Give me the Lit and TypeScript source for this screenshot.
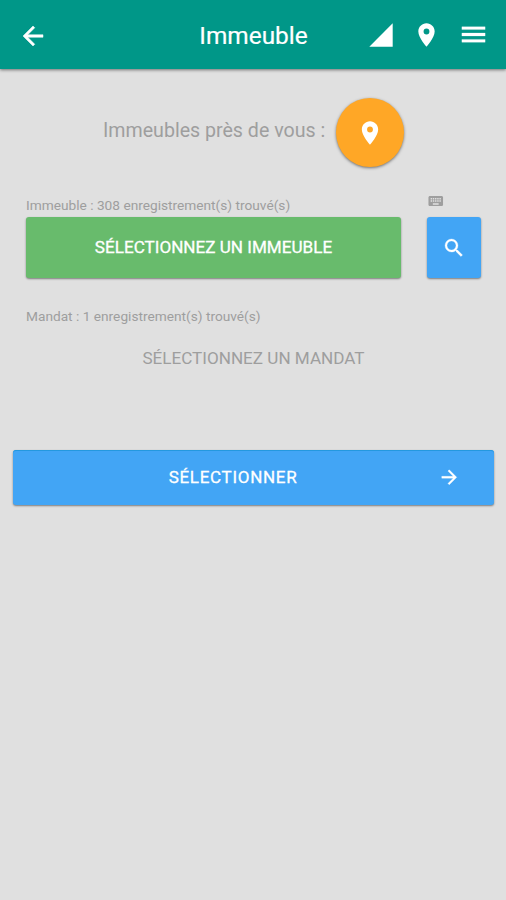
import { LitElement, html, css, svg } from "lit";
import { customElement, property } from "lit/decorators.js";

const ICONS: Record<string, string> = {
  back: "M20 11H7.83l5.59-5.59L12 4l-8 8 8 8 1.41-1.41L7.83 13H20v-2z",
  forward: "M12 4l-1.41 1.41L16.17 11H4v2h12.17l-5.58 5.59L12 20l8-8z",
  signal: "M2 22h20V2z",
  pin: "M12 2C8.13 2 5 5.13 5 9c0 5.25 7 13 7 13s7-7.75 7-13c0-3.87-3.13-7-7-7zm0 9.5a2.5 2.5 0 0 1 0-5 2.5 2.5 0 0 1 0 5z",
  menu: "M3 18h18v-2.2H3V18zm0-4.9h18v-2.2H3v2.2zM3 6v2.2h18V6H3z",
  search:
    "M15.5 14h-.79l-.28-.27A6.471 6.471 0 0 0 16 9.5 6.5 6.5 0 1 0 9.5 16c1.61 0 3.09-.59 4.23-1.57l.27.28v.79l5 4.99L20.49 19l-4.99-5zm-6 0C7.01 14 5 11.99 5 9.5S7.01 5 9.5 5 14 7.01 14 9.5 11.99 14 9.5 14z",
  keyboard:
    "M20 5H4c-1.1 0-1.99.9-1.99 2L2 17c0 1.1.9 2 2 2h16c1.1 0 2-.9 2-2V7c0-1.1-.9-2-2-2zm-9 3h2v2h-2V8zm0 3h2v2h-2v-2zM8 8h2v2H8V8zm0 3h2v2H8v-2zm-1 2H5v-2h2v2zm0-3H5V8h2v2zm9 7H8v-2h8v2zm0-4h-2v-2h2v2zm0-3h-2V8h2v2zm3 3h-2v-2h2v2zm0-3h-2V8h2v2z",
};

@customElement("md-icon")
class MdIcon extends LitElement {
  @property() name = "";
  static styles = css`
    :host { display: block; flex: none; width: 24px; height: 24px; }
    svg {
      display: block;
      width: 100%;
      height: 100%;
      fill: currentColor;
      stroke: currentColor;
      stroke-width: var(--icon-stroke, 0);
    }
  `;
  render() {
    return html`<svg viewBox="0 0 24 24" aria-hidden="true">${svg`<path d=${ICONS[this.name]}></path>`}</svg>`;
  }
}

@customElement("app-root")
class AppRoot extends LitElement {
  static styles = css`
    :host {
      display: block;
      height: 900px;
      overflow: hidden;
      background: #e0e0e0;
      font-family: Roboto, "Liberation Sans", sans-serif;
      color: #9e9e9e;
    }
    * { box-sizing: border-box; }
    button {
      border: 0;
      margin: 0;
      padding: 0;
      font: inherit;
      color: #fff;
      display: flex;
      align-items: center;
      justify-content: center;
    }
    header {
      height: 69px;
      background: #009788;
      color: #fff;
      box-shadow: 0 1px 3px rgba(0, 0, 0, 0.5);
      display: grid;
      grid-template-columns: 145px 1fr 145px;
      align-items: center;
    }
    .back { width: 30px; height: 30px; margin: 2px 0 0 18px; --icon-stroke: 0.4; }
    h1 {
      margin: 2px 0 0;
      padding-left: 1px;
      font-size: 24.4px;
      line-height: 30px;
      font-weight: 400;
      text-align: center;
      white-space: nowrap;
      -webkit-text-stroke: 0.2px;
    }
    .tools { display: flex; align-items: center; padding: 1px 0 0 6px; }
    .signal { width: 28px; height: 28px; }
    .pin { width: 29px; height: 28px; margin-left: 17px; }
    .menu { width: 31px; height: 31px; margin: -1px 0 0 17px; --icon-stroke: 0.2; }
    .near {
      height: 69px;
      margin: 29px 0 0 103px;
      display: flex;
      align-items: center;
    }
    .near-text {
      width: 232.5px;
      font-size: 19.6px;
      line-height: 24px;
      padding-bottom: 3px;
      white-space: nowrap;
    }
    .fab {
      width: 68.5px;
      height: 69px;
      border-radius: 50%;
      background: #ffa726;
      box-shadow: 0 1px 3px rgba(0, 0, 0, 0.5);
    }
    .fab md-icon { width: 28px; height: 28px; }
    .building {
      display: grid;
      grid-template-columns: 375px 54px;
      grid-template-rows: 22px 61px;
      column-gap: 26px;
      margin: 28px 0 0 26px;
    }
    .caption { font-size: 13.7px; line-height: 20px; white-space: nowrap; }
    .keyboard { width: 17.5px; height: 18px; margin: -3px 0 0 -0.5px; }
    .raised {
      border-radius: 3px;
      box-shadow: 0 1px 2px rgba(0, 0, 0, 0.45);
      font-size: 17px;
      font-weight: 500;
      --icon-stroke: 0.3;
    }
    .green {
      background: #68bb6c;
      font-size: 17.1px;
      font-weight: 400;
      -webkit-text-stroke: 0.3px;
      line-height: 20px;
      padding-bottom: 1px;
    }
    .blue { background: #42a5f5; }
    .mandate { margin: 28px 26px 0; }
    .mandate-pick {
      font-size: 17.1px;
      line-height: 22px;
      margin-top: 21px;
      padding-left: 1px;
      text-align: center;
    }
    .submit {
      width: 481px;
      height: 55px;
      margin: 81px 0 0 13px;
      padding-bottom: 1px;
      font-weight: 400;
      -webkit-text-stroke: 0.3px;
      letter-spacing: 0.7px;
      display: grid;
      grid-template-columns: 440px auto;
      justify-content: start;
      box-shadow: 0 1px 2px rgba(0, 0, 0, 0.45), inset 0 1px 0 #2498df;
    }
    .submit md-icon { width: 22.5px; height: 22.5px; margin: 1px 0 0 -15.5px; }
  `;
  render() {
    return html`
      <header>
        <md-icon class="back" name="back"></md-icon>
        <h1>Immeuble</h1>
        <div class="tools">
          <md-icon class="signal" name="signal"></md-icon>
          <md-icon class="pin" name="pin"></md-icon>
          <md-icon class="menu" name="menu"></md-icon>
        </div>
      </header>
      <main>
        <section class="near">
          <span class="near-text">Immeubles près de vous :</span>
          <button class="fab" aria-label="Localiser"><md-icon name="pin"></md-icon></button>
        </section>
        <section class="building">
          <span class="caption">Immeuble : 308 enregistrement(s) trouvé(s)</span>
          <md-icon class="keyboard" name="keyboard"></md-icon>
          <button class="raised green">SÉLECTIONNEZ UN IMMEUBLE</button>
          <button class="raised blue" aria-label="Rechercher"><md-icon name="search"></md-icon></button>
        </section>
        <section class="mandate">
          <div class="caption">Mandat : 1 enregistrement(s) trouvé(s)</div>
          <div class="mandate-pick">SÉLECTIONNEZ UN MANDAT</div>
        </section>
        <button class="raised blue submit">
          <span>SÉLECTIONNER</span>
          <md-icon name="forward"></md-icon>
        </button>
      </main>
    `;
  }
}
